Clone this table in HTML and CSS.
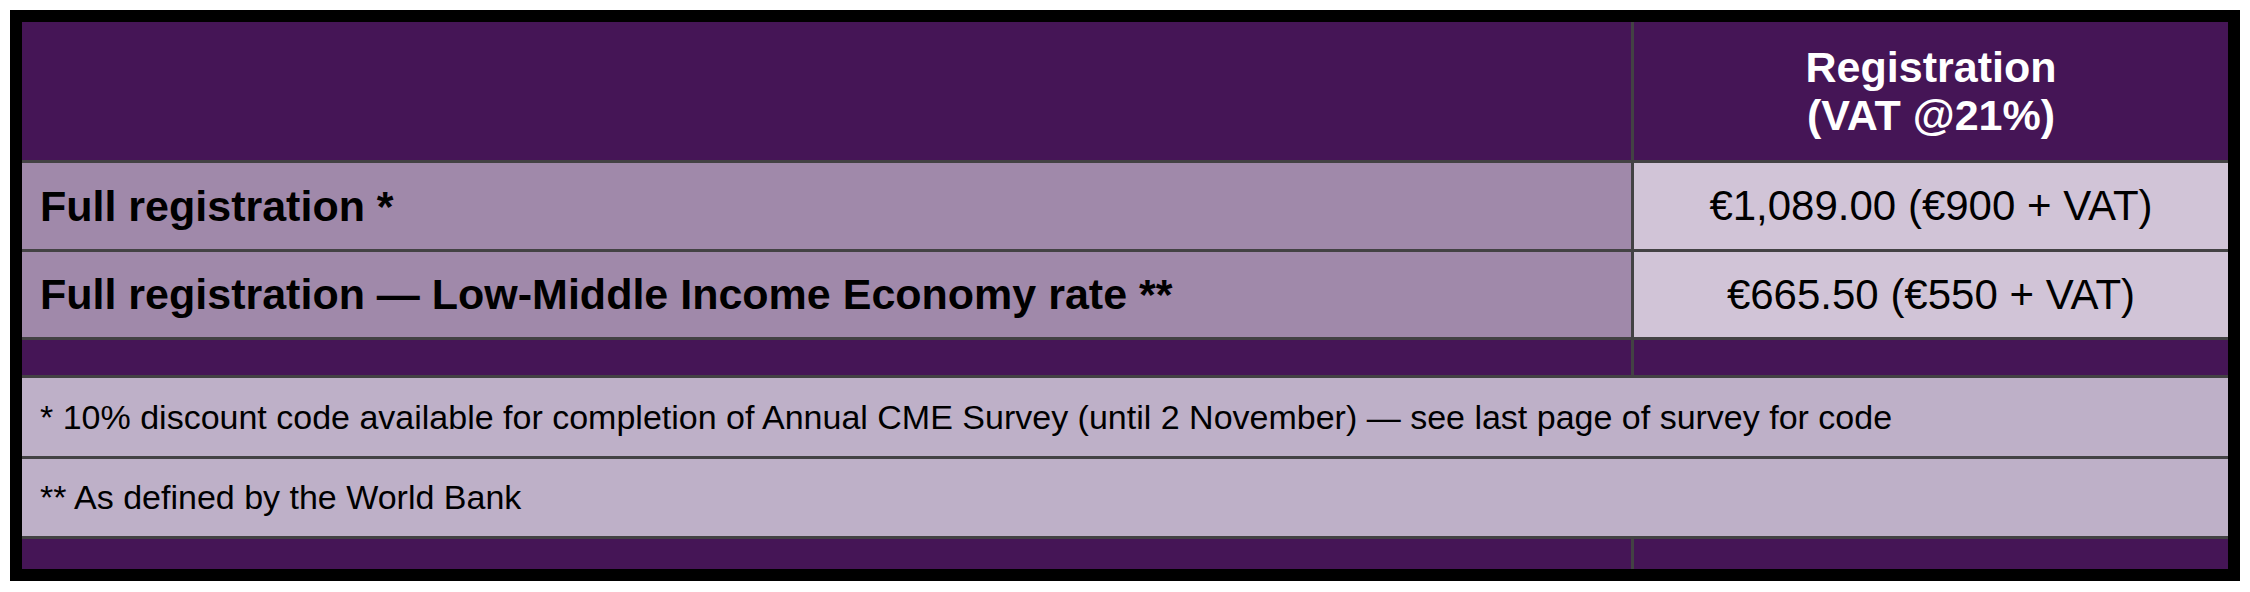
FILE: index.html
```html
<!DOCTYPE html>
<html lang="en">
<head>
<meta charset="utf-8">
<title>Registration fees</title>
<link rel="stylesheet" href="styles.css">
</head>
<body>
<div class="frame">
  <div class="fees">
    <div class="cell head"></div>
    <div class="cell head head-label">Registration<br>(VAT @21%)</div>

    <div class="cell label">Full registration *</div>
    <div class="cell price">€1,089.00 (€900 + VAT)</div>

    <div class="cell label">Full registration — Low-Middle Income Economy rate **</div>
    <div class="cell price">€665.50 (€550 + VAT)</div>

    <div class="cell head"></div>
    <div class="cell head"></div>

    <div class="cell note">* 10% discount code available for completion of Annual CME Survey (until 2 November) — see last page of survey for code</div>

    <div class="cell note">** As defined by the World Bank</div>

    <div class="cell head"></div>
    <div class="cell head"></div>
  </div>
</div>
</body>
</html>
```

FILE: styles.css
```css
html, body {
  margin: 0;
  padding: 0;
  background: #ffffff;
}

body {
  padding: 10px;
  font-family: "Liberation Sans", Arial, Helvetica, sans-serif;
}

.frame {
  width: 2206px;
  border: 12px solid #000000;
}

.fees {
  display: grid;
  grid-template-columns: 1609px 594px;
  grid-template-rows: 138px 86px 85px 35px 78px 77px 30px;
  gap: 3px;
  background: #434244;
}

.cell {
  display: flex;
  align-items: center;
  color: #000000;
}

.head {
  background: #451556;
}

.head-label {
  justify-content: center;
  text-align: center;
  color: #ffffff;
  font-weight: bold;
  font-size: 43px;
  line-height: 48px;
}

.label {
  background: #a089aa;
  font-weight: bold;
  font-size: 43px;
  padding-left: 18px;
}

.price {
  background: #d1c4d7;
  justify-content: center;
  font-size: 42px;
}

.note {
  grid-column: 1 / span 2;
  background: #beb0c8;
  font-size: 34px;
  padding-left: 18px;
}
```
